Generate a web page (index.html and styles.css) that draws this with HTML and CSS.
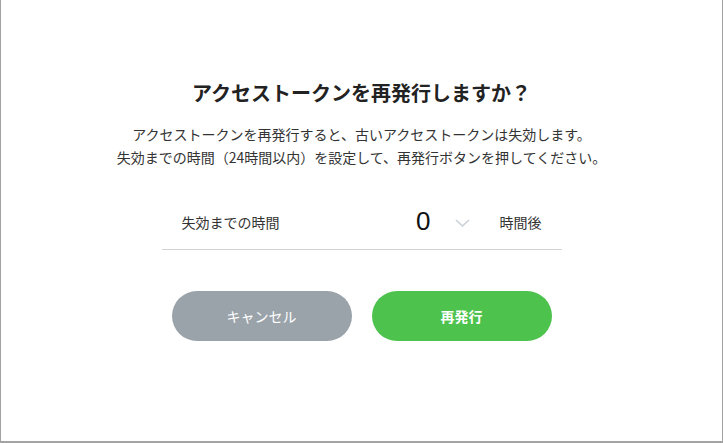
FILE: index.html
```html
<!DOCTYPE html>
<html lang="ja">
<head>
<meta charset="utf-8">
<title>アクセストークンを再発行</title>
<link rel="stylesheet" href="styles.css">
</head>
<body>
<div class="frame">
  <div class="dialog">
    <h1 class="title">アクセストークンを再発行しますか？</h1>
    <p class="desc">アクセストークンを再発行すると、古いアクセストークンは失効します。<br>失効までの時間（24時間以内）を設定して、再発行ボタンを押してください。</p>
    <div class="row">
      <span class="label">失効までの時間</span>
      <div class="value">
        <span class="select">
          <span class="num">0</span>
          <svg class="chev" width="15" height="8" viewBox="0 0 15 8"><path d="M1 1 L7.5 7 L14 1" fill="none" stroke="#cbd1d7" stroke-width="1.6"/></svg>
        </span>
        <span class="unit">時間後</span>
      </div>
    </div>
    <div class="buttons">
      <button class="btn btn-cancel">キャンセル</button>
      <button class="btn btn-ok">再発行</button>
    </div>
  </div>
</div>
</body>
</html>
```

FILE: styles.css
```css
html, body {
  margin: 0;
  padding: 0;
  background: #fff;
}
body {
  font-family: "Noto Sans CJK JP", "Noto Sans", sans-serif;
  color: #333;
}
.frame {
  box-sizing: border-box;
  height: 443px;
  border-left: 1px solid #a3a3a3;
  border-right: 1px solid #a3a3a3;
  border-bottom: 2px solid #a3a3a3;
}
.dialog {
  display: flex;
  flex-direction: column;
  align-items: center;
  padding-top: 79px;
}
.title {
  margin: 0;
  font-size: 20px;
  line-height: 28px;
  font-weight: 700;
  color: #222;
}
.desc {
  margin: 16px 0 0;
  font-size: 14px;
  line-height: 23px;
  text-align: center;
  color: #333;
}
.row {
  box-sizing: border-box;
  width: 400px;
  margin-top: 39px;
  padding: 0 20px 13px;
  border-bottom: 1px solid #d3d3d3;
  display: flex;
  align-items: center;
  justify-content: space-between;
}
.label {
  font-size: 14px;
  line-height: 28px;
}
.value {
  display: flex;
  align-items: center;
  gap: 30px;
}
.select {
  display: flex;
  align-items: center;
  gap: 24px;
}
.num {
  font-family: "Liberation Sans", Arial, sans-serif;
  font-size: 26px;
  line-height: 28px;
  color: #111;
  margin-top: -3px;
}
.chev {
  display: block;
  margin-top: 1px;
}
.unit {
  font-size: 14px;
  line-height: 28px;
}
.buttons {
  display: flex;
  gap: 20px;
  margin-top: 41px;
}
.btn {
  width: 180px;
  height: 50px;
  border: none;
  border-radius: 25px;
  font-family: "Noto Sans CJK JP", sans-serif;
  font-size: 14px;
  color: #fff;
  padding: 0;
}
.btn-cancel {
  background: #9ba3aa;
}
.btn-ok {
  background: #4dc34e;
  font-weight: 700;
}
```
